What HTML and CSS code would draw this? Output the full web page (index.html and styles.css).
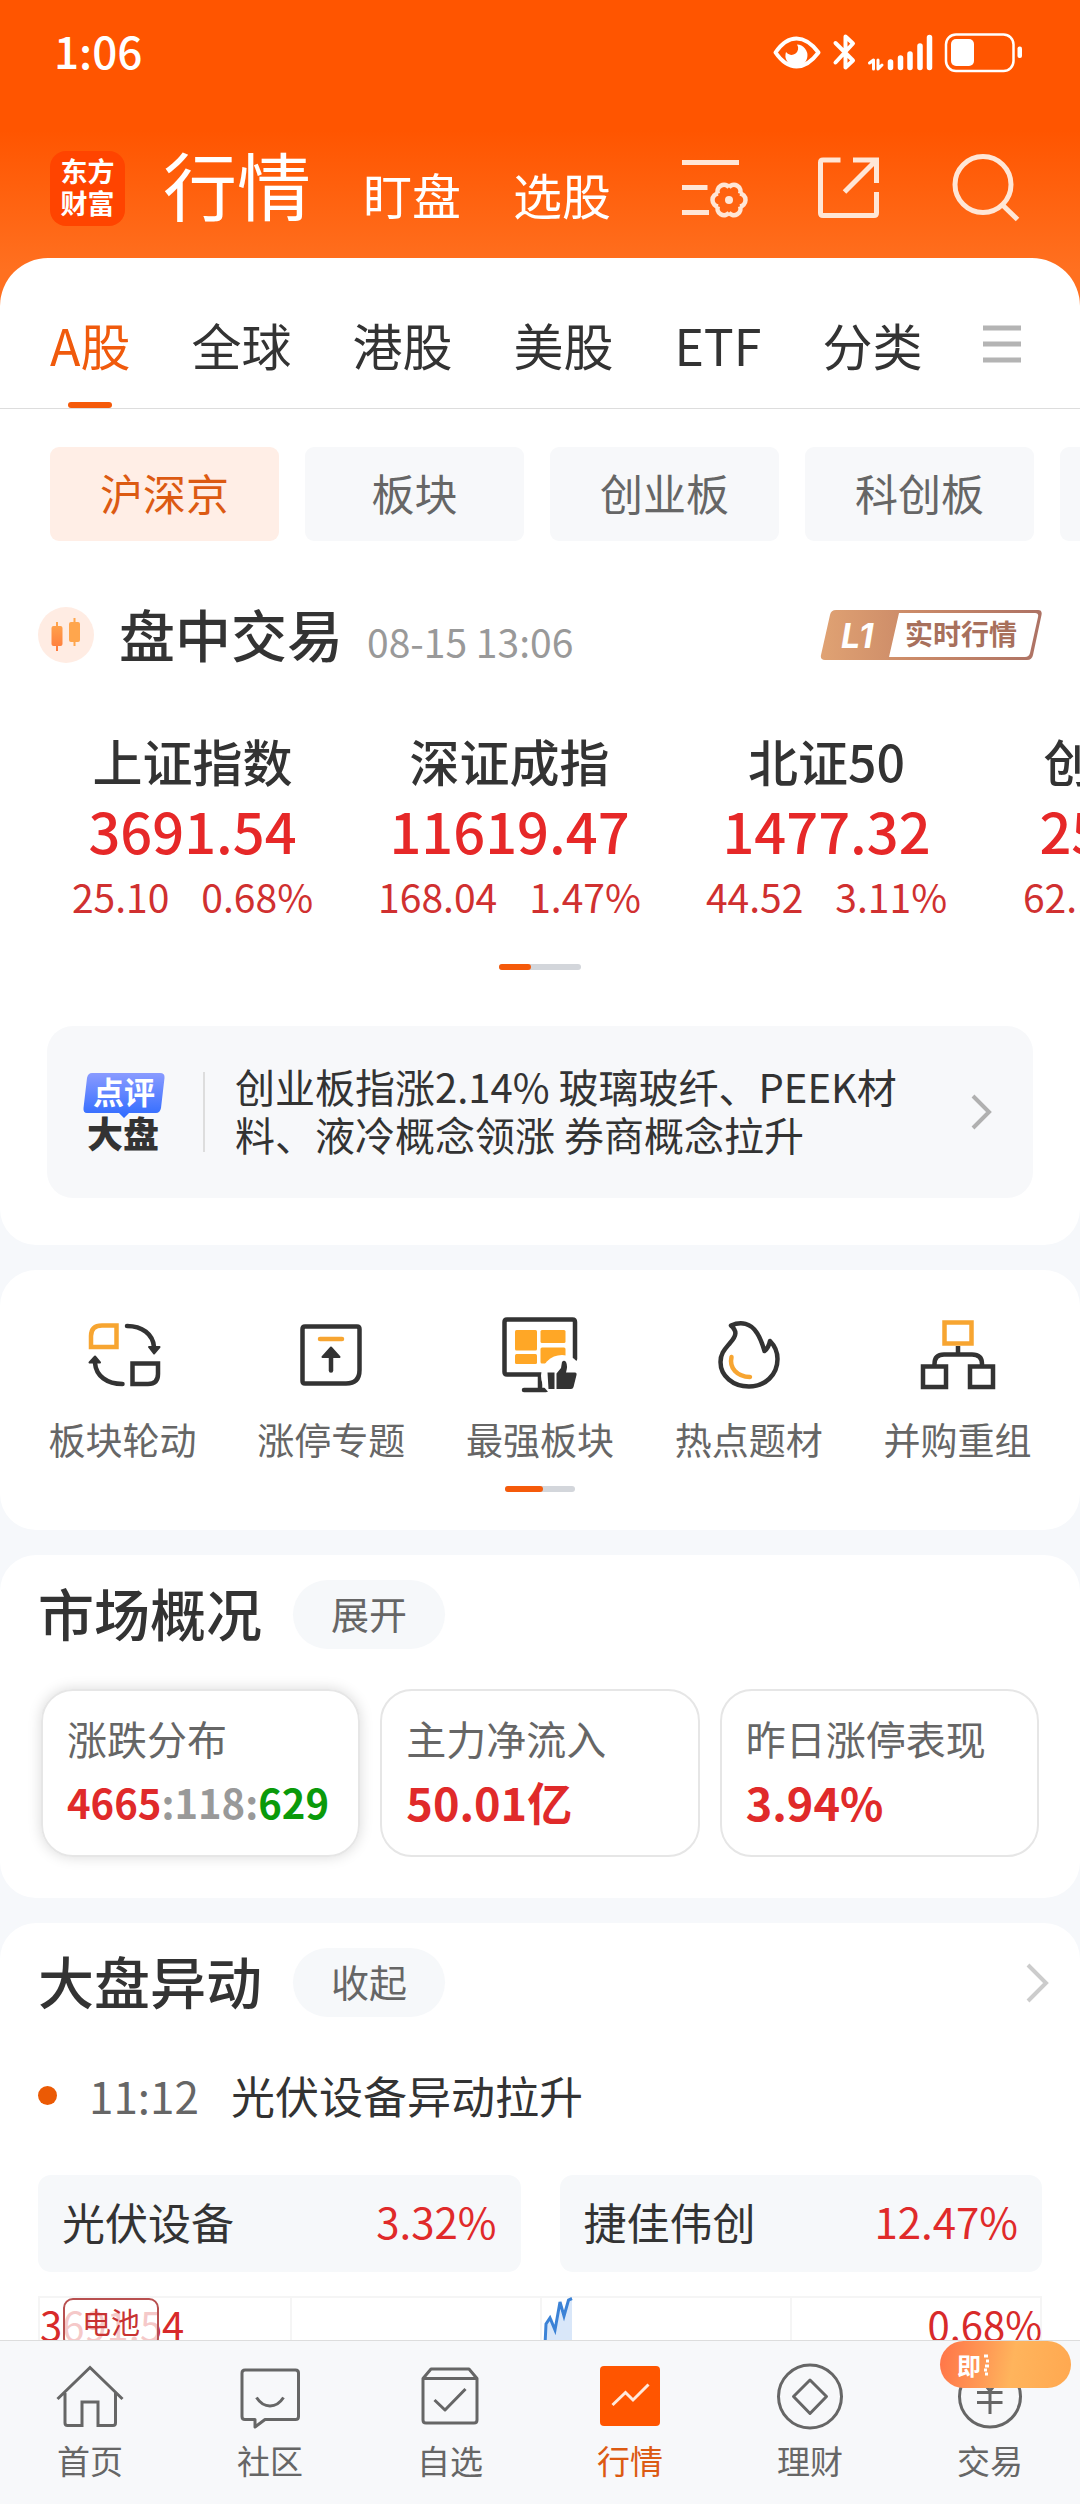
FILE: index.html
```html
<!DOCTYPE html>
<html lang="zh-CN">
<head>
    <meta charset="UTF-8">
    <meta name="viewport" content="width=device-width, initial-scale=1.0">
    <title>行情</title>
    <link rel="stylesheet" href="styles.css">
</head>
<body>
    <div class="app">
        <header class="header">
            <div class="status-bar">
                <span class="clock">1:06</span>
                <svg class="status-icons" width="256" height="48" viewBox="0 0 256 48" fill="none" stroke="#fff" stroke-linecap="round" stroke-linejoin="round">
                    <path d="M5.500 23.500Q15 9.500 26.500 9.500T48.500 23.500Q38 37.500 26.500 37.500T5.500 23.500Z" stroke-width="4"/>
                    <path d="M27 15.500A11 11 0 1 1 16 23A6.500 6.500 0 0 0 27 15.500Z" fill="#fff" stroke="none"/>
                    <path d="M65.500 14L83 31.500L75.500 38.500V7.500L83 14.500L65.500 33.500" stroke-width="4"/>
                    <path d="M99.500 34L103.500 31V40M108 31V40L112 36" stroke-width="3"/>
                    <path d="M120.500 33V38.500M130.500 29V38.500M140 25V38.500M150 17V38.500M159.500 8.500V38.500" stroke-width="5.500"/>
                    <rect x="176" y="5.500" width="67.500" height="36.500" rx="10" stroke-width="2.500"/>
                    <rect x="181" y="10" width="23" height="27" rx="5" fill="#fff" stroke="none"/>
                    <rect x="247.500" y="17.500" width="4.500" height="11.500" rx="2" fill="#fff" stroke="none"/>
                </svg>
            </div>
            <div class="title-bar">
                <div class="logo"><span>东方</span><span>财富</span></div>
                <nav class="main-tabs">
                    <a href="#" class="current">行情</a>
                    <a href="#">盯盘</a>
                    <a href="#">选股</a>
                </nav>
                <div class="tools">
                    <button aria-label="设置">
                        <svg width="72" height="72" viewBox="0 0 72 72" fill="none" stroke="#ffe6d6" stroke-width="5">
                            <path d="M4 10.500H61M4 35.500H29.500M4 60.500H31"/>
                            <g transform="translate(51 48)" stroke-width="4.500" stroke-linejoin="round">
                                <path id="tooth" d="M11 -6.500C13.500 -6 16.500 -4 16.500 0S13.500 6 11 6.500"/>
                                <use href="#tooth" transform="rotate(60)"/>
                                <use href="#tooth" transform="rotate(120)"/>
                                <use href="#tooth" transform="rotate(180)"/>
                                <use href="#tooth" transform="rotate(240)"/>
                                <use href="#tooth" transform="rotate(300)"/>
                                <circle r="4" fill="#ffe6d6" stroke="none"/>
                            </g>
                        </svg>
                    </button>
                    <button aria-label="分享">
                        <svg width="72" height="72" viewBox="0 0 72 72" fill="none" stroke="#ffe6d6" stroke-width="5">
                            <path d="M27.500 8H10Q7.500 8 7.500 10.500V61Q7.500 63.500 10 63.500H61Q63.500 63.500 63.500 61V40M40 8H63.500V31M63 8.500L31.500 40"/>
                        </svg>
                    </button>
                    <button aria-label="搜索">
                        <svg width="72" height="72" viewBox="0 0 72 72" fill="none" stroke="#ffe6d6" stroke-width="5">
                            <circle cx="35" cy="32.500" r="28"/>
                            <path d="M54 52.500L69.500 67.500"/>
                        </svg>
                    </button>
                </div>
            </div>
        </header>

        <main class="content">
            <section class="sheet">
                <nav class="market-tabs">
                    <a href="#" class="active">A股</a>
                    <a href="#">全球</a>
                    <a href="#">港股</a>
                    <a href="#">美股</a>
                    <a href="#">ETF</a>
                    <a href="#">分类</a>
                    <button class="menu-btn" aria-label="更多">
                        <svg width="38" height="38" viewBox="0 0 38 38" stroke="#b4b4b4" stroke-width="5">
                            <path d="M0 3H38M0 19H38M0 35H38"/>
                        </svg>
                    </button>
                </nav>

                <div class="chips">
                    <button class="chip active">沪深京</button>
                    <button class="chip">板块</button>
                    <button class="chip">创业板</button>
                    <button class="chip">科创板</button>
                    <button class="chip">北交所</button>
                </div>

                <div class="session">
                    <svg width="56" height="56" viewBox="0 0 56 56">
                        <defs>
                            <linearGradient id="candle" x1="0" y1="0" x2="0" y2="1">
                                <stop offset="0" stop-color="#ffa64d"/>
                                <stop offset="1" stop-color="#ff7a3d"/>
                            </linearGradient>
                        </defs>
                        <circle cx="28" cy="28" r="28" fill="#ffece3"/>
                        <path d="M18 15h2v4h2.500q2 0 2 2v16q0 2-2 2h-2.500v5h-2v-5h-2.500q-2 0-2-2V21q0-2 2-2h2.500z" fill="url(#candle)"/>
                        <path d="M35.500 11h2v4h2.500q2 0 2 2v16q0 2-2 2h-2.500v4h-2v-4h-2.500q-2 0-2-2V17q0-2 2-2h2.500z" fill="#ffa64d"/>
                    </svg>
                    <h2>盘中交易</h2>
                    <time>08-15 13:06</time>
                    <a href="#" class="level-badge" aria-label="L1 实时行情">
                        <svg width="222" height="50" viewBox="0 0 222 50">
                            <defs>
                                <linearGradient id="bronze" x1="0" y1="0" x2="1" y2="0">
                                    <stop offset="0" stop-color="#e0a273"/>
                                    <stop offset="0.4" stop-color="#cc8b68"/>
                                    <stop offset="1" stop-color="#ad7264"/>
                                </linearGradient>
                            </defs>
                            <path d="M16 0H218Q222.500 0 221.500 5L213 45Q212 50 207 50H5Q0 50 1 45L10 5Q11 0 16 0Z" fill="url(#bronze)"/>
                            <path d="M79 3H215Q219 3 218 7L210 43Q209 47 205 47H69Z" fill="#fff"/>
                            <text x="21" y="38" class="level-name">L1</text>
                            <text x="85" y="35" class="level-text">实时行情</text>
                        </svg>
                    </a>
                </div>

                <div class="indices">
                    <a href="#" class="index">
                        <span class="index-name">上证指数</span>
                        <span class="index-value">3691.54</span>
                        <span class="index-change"><span>25.10</span><span>0.68%</span></span>
                    </a>
                    <a href="#" class="index">
                        <span class="index-name">深证成指</span>
                        <span class="index-value">11619.47</span>
                        <span class="index-change"><span>168.04</span><span>1.47%</span></span>
                    </a>
                    <a href="#" class="index">
                        <span class="index-name">北证50</span>
                        <span class="index-value">1477.32</span>
                        <span class="index-change"><span>44.52</span><span>3.11%</span></span>
                    </a>
                    <a href="#" class="index">
                        <span class="index-name">创业板指</span>
                        <span class="index-value">2534.22</span>
                        <span class="index-change"><span>62.10</span><span>2.14%</span></span>
                    </a>
                </div>
                <div class="pager wide"><i></i></div>

                <a href="#" class="news">
                    <svg class="news-logo" width="82" height="82" viewBox="0 0 82 82">
                        <defs>
                            <linearGradient id="bubble" x1="0" y1="0" x2="0" y2="1">
                                <stop offset="0" stop-color="#8a9bff"/>
                                <stop offset="1" stop-color="#2f6bff"/>
                            </linearGradient>
                        </defs>
                        <path d="M9 2H77Q82 2 81.500 7L78 37Q77 42 73 42H46L41 47L36 42H4Q0 42 0.500 37L4 7Q5 2 9 2Z" fill="url(#bubble)"/>
                        <text x="10" y="33" class="bubble-text">点评</text>
                        <text x="4" y="77" class="board-text">大盘</text>
                    </svg>
                    <span class="news-text">创业板指涨2.14% 玻璃玻纤、PEEK材料、液冷概念领涨 券商概念拉升</span>
                    <svg width="22" height="38" viewBox="0 0 22 38" fill="none" stroke="#b0b0b0" stroke-width="4">
                        <path d="M2 3L18 19L2 35"/>
                    </svg>
                </a>
            </section>

            <section class="card features">
                <div class="feature-list">
                    <a href="#" class="feature">
                        <svg width="80" height="80" viewBox="0 0 80 80" fill="none" stroke="#333" stroke-width="4.500" stroke-linecap="round">
                            <path d="M34.500 9.500H20Q9 9.500 9 20V31H34.500Z" stroke="#f7a531" stroke-linecap="butt"/>
                            <path d="M45 10C60 10 71 18 72 31M40.500 68C25 68 14 60 13 47"/>
                            <path d="M67 31H77.500L72 37.500ZM7.500 46.500H18L13 40.500Z" fill="#333" stroke-width="2" stroke-linejoin="round"/>
                            <path d="M50.500 47.500H76V58Q76 68 66 68H50.500Z"/>
                        </svg>
                        <span>板块轮动</span>
                    </a>
                    <a href="#" class="feature">
                        <svg width="80" height="80" viewBox="0 0 80 80" fill="none" stroke="#333" stroke-width="4.500" stroke-linecap="round">
                            <path d="M14 10.500H66Q68.500 10.500 68.500 13V54Q68.500 67.500 55 67.500H14Q11.500 67.500 11.500 65V13Q11.500 10.500 14 10.500Z"/>
                            <path d="M29 23H51" stroke="#f7a531"/>
                            <path d="M40 38V54.500"/>
                            <path d="M40 31.500L48.500 41H31.500Z" fill="#333" stroke-width="2" stroke-linejoin="round"/>
                        </svg>
                        <span>涨停专题</span>
                    </a>
                    <a href="#" class="feature">
                        <svg width="80" height="80" viewBox="0 0 80 80">
                            <path d="M75 43V6Q75 3.500 72.500 3.500H7Q4.500 3.500 4.500 6V56Q4.500 58.500 7 58.500H50M40 59V74M24 74H46" fill="none" stroke="#333" stroke-width="4.500" stroke-linecap="round"/>
                            <g fill="#ffa726">
                                <rect x="15" y="14" width="22" height="20.500" rx="1.500"/>
                                <rect x="15" y="38" width="22" height="10" rx="1.500"/>
                                <rect x="40.500" y="14" width="25" height="13" rx="1.500"/>
                                <rect x="40.500" y="31.500" width="25" height="16" rx="1.500"/>
                            </g>
                            <circle cx="62" cy="60" r="21" fill="#fff"/>
                            <path d="M47.500 56.500H54.500V73H48.500ZM56.500 73V57.500L61 52L62 46Q64 43.500 66 46Q68 50 66 56.500H75Q77 56.500 76.500 59L73.500 71Q73 73 71 73Z" fill="#333"/>
                        </svg>
                        <span>最强板块</span>
                    </a>
                    <a href="#" class="feature">
                        <svg width="80" height="80" viewBox="0 0 80 80" fill="none" stroke="#333" stroke-width="4.500" stroke-linecap="round" stroke-linejoin="round">
                            <path d="M22 9.500C32 5 42 7 48 17C52 23 54 30 55.500 35C58 33 60 30 61 25C65 29 68.500 36 68.500 43C68.500 59 56 70.500 40 70.500C24 70.500 11.500 60 11.500 46C11.500 37 16 33 21 27C28 19 28 15 22 9.500Z"/>
                            <path d="M22.500 41C20 52 28 60.500 41 61" stroke="#f7a531"/>
                        </svg>
                        <span>热点题材</span>
                    </a>
                    <a href="#" class="feature">
                        <svg width="80" height="80" viewBox="0 0 80 80" fill="none" stroke="#333" stroke-width="4.500">
                            <path d="M40 30V39M16.500 50V48Q16.500 38.500 26 38.500H54Q64 38.500 64 48V50"/>
                            <rect x="26.500" y="6.500" width="27" height="21" stroke="#f7a531"/>
                            <rect x="5" y="50.500" width="23" height="20.500"/>
                            <rect x="52" y="50.500" width="23" height="20.500"/>
                        </svg>
                        <span>并购重组</span>
                    </a>
                </div>
                <div class="pager"><i></i></div>
            </section>

            <section class="card">
                <div class="card-head">
                    <h2>市场概况</h2>
                    <button class="pill">展开</button>
                </div>
                <div class="overview">
                    <button class="stat selected">
                        <span class="stat-label">涨跌分布</span>
                        <span class="stat-value ratio"><span class="up">4665</span><span class="flat">:118:</span><span class="down">629</span></span>
                    </button>
                    <button class="stat">
                        <span class="stat-label">主力净流入</span>
                        <span class="stat-value up">50.01亿</span>
                    </button>
                    <button class="stat">
                        <span class="stat-label">昨日涨停表现</span>
                        <span class="stat-value up">3.94%</span>
                    </button>
                </div>
            </section>

            <section class="card moves">
                <div class="card-head">
                    <h2>大盘异动</h2>
                    <button class="pill">收起</button>
                    <a href="#" class="more" aria-label="查看更多">
                        <svg width="24" height="42" viewBox="0 0 24 42" fill="none" stroke="#ccc" stroke-width="4">
                            <path d="M2 3L20 21L2 39"/>
                        </svg>
                    </a>
                </div>
                <div class="event">
                    <i class="dot"></i>
                    <time>11:12</time>
                    <span>光伏设备异动拉升</span>
                </div>
                <div class="tiles">
                    <a href="#" class="tile"><span>光伏设备</span><span class="up rate">3.32%</span></a>
                    <a href="#" class="tile"><span>捷佳伟创</span><span class="up rate">12.47%</span></a>
                </div>
                <div class="chart">
                    <div class="chart-grid"><i></i><i></i><i></i><i></i></div>
                    <div class="chart-labels"><span>3691.54</span><span>0.68%</span></div>
                    <span class="chart-tag">电池</span>
                    <svg class="chart-line" width="30" height="60" viewBox="0 0 30 60">
                        <path d="M2 60L4 28L9 22L13 34L18 6L21 20L26 4L29 3V60Z" fill="#d9e7f9"/>
                        <path d="M1.500 60L3 28L7 22L12 34L17 6L21 20L25.500 4L29 2.500" fill="none" stroke="#3b82d6" stroke-width="3"/>
                    </svg>
                </div>
            </section>
        </main>

        <nav class="bottom-nav">
            <a href="#">
                <svg width="72" height="72" viewBox="0 0 72 72" fill="none" stroke="#666" stroke-width="3">
                    <path d="M3.500 39L36 7.500L68.500 39M11 33V63Q11 65.500 13.500 65.500H28V42H44V65.500H59Q61.500 65.500 61.500 63V33"/>
                </svg>
                <span>首页</span>
            </a>
            <a href="#">
                <svg width="72" height="72" viewBox="0 0 72 72" fill="none" stroke="#666" stroke-width="3" stroke-linejoin="round">
                    <path d="M11 10H61.500Q64.500 10 64.500 13V56.500Q64.500 59.500 61.500 59.500H31L21 67V59.500H11Q8 59.500 8 56.500V13Q8 10 11 10Z"/>
                    <path d="M22.500 37.500Q28 46 36 46T49.500 37.500"/>
                </svg>
                <span>社区</span>
            </a>
            <a href="#">
                <svg width="72" height="72" viewBox="0 0 72 72" fill="none" stroke="#666" stroke-width="3" stroke-linejoin="round">
                    <path d="M9 18.500L17 9H55L63 18.500V60Q63 63 60 63H12Q9 63 9 60ZM9 18.500H63"/>
                    <path d="M20.500 40L31 50L51.500 29"/>
                </svg>
                <span>自选</span>
            </a>
            <a href="#" class="active">
                <svg width="72" height="72" viewBox="0 0 72 72">
                    <rect x="6" y="6" width="60" height="60" rx="4" fill="#ff5500"/>
                    <path d="M18.500 45L31.500 32.500L39 40L54.500 24.500" fill="none" stroke="#ffe9dc" stroke-width="3"/>
                </svg>
                <span>行情</span>
            </a>
            <a href="#">
                <svg width="72" height="72" viewBox="0 0 72 72" fill="none" stroke="#666" stroke-width="3" stroke-linejoin="round">
                    <circle cx="36" cy="36.500" r="31.500"/>
                    <path d="M36 20L52.500 36.500L36 53.500L19.500 36.500Z"/>
                </svg>
                <span>理财</span>
            </a>
            <a href="#">
                <svg width="72" height="72" viewBox="0 0 72 72" fill="none" stroke="#666" stroke-width="3">
                    <circle cx="36" cy="36.500" r="30.500"/>
                    <path d="M26 18L36 31L46 18M23 32.500H48.500M23 42.500H48.500M36 31V54"/>
                </svg>
                <span>交易</span>
                <em class="promo">即<svg width="8" height="22" viewBox="0 0 8 22" stroke="#fff" stroke-width="3"><path d="M1 2H5M3 7H6M2 12H6M1 16H4M2 20H5"/></svg></em>
            </a>
        </nav>
    </div>
</body>
</html>
```
FILE: styles.css
```css
* {
    margin: 0;
    padding: 0;
    box-sizing: border-box;
}

body {
    font-family: "Noto Sans CJK SC", sans-serif;
    background-color: #f6f8fb;
    color: #333;
}

a {
    color: inherit;
    text-decoration: none;
}

button {
    font-family: inherit;
    color: inherit;
    background: none;
    border: none;
    cursor: pointer;
}

svg {
    display: block;
    flex-shrink: 0;
}

.app {
    height: 100vh;
    display: flex;
    flex-direction: column;
}

.up {
    color: #e02a2a;
}

.flat {
    color: #999;
}

.down {
    color: #0a9a0a;
}

/* header */
.header {
    flex-shrink: 0;
    padding-bottom: 68px;
    background: linear-gradient(#ff5500 130px, #ff7020 270px);
    color: #fff;
}

.status-bar {
    height: 106px;
    padding: 0 54px;
    display: flex;
    align-items: center;
    justify-content: space-between;
}

.clock {
    padding-bottom: 6px;
    font-size: 44px;
    font-weight: 500;
    line-height: 60px;
}

.title-bar {
    height: 100px;
    margin-top: 32px;
    padding: 0 60px 0 50px;
    display: flex;
    align-items: center;
}

.logo {
    width: 75px;
    height: 75px;
    padding-bottom: 3px;
    border-radius: 16px;
    background-color: #ff4400;
    display: flex;
    flex-direction: column;
    align-items: center;
    justify-content: center;
    font-size: 27px;
    font-weight: 700;
    line-height: 32px;
}

.main-tabs {
    display: flex;
    align-items: baseline;
    gap: 52px;
    margin-left: 38px;
    font-size: 49px;
    line-height: 100px;
}

.main-tabs .current {
    font-size: 74px;
}

.tools {
    display: flex;
    gap: 63px;
    margin-left: auto;
}

/* first sheet */
.content {
    flex: 1;
    min-height: 0;
    overflow: hidden;
    margin-top: -48px;
}

.sheet {
    background-color: #fff;
    border-radius: 48px 48px 36px 36px;
    padding-bottom: 47px;
    overflow: hidden;
}

.market-tabs {
    display: flex;
    align-items: center;
    gap: 61px;
    padding: 22px 50px 0;
    border-bottom: 1px solid #ddd;
    font-size: 50px;
    line-height: 128px;
}

.market-tabs .active {
    position: relative;
    color: #f05a0c;
}

.market-tabs .active::after {
    content: "";
    position: absolute;
    left: 50%;
    bottom: 0;
    width: 44px;
    height: 6px;
    margin-left: -22px;
    border-radius: 3px;
    background-color: #f55a0a;
}

.chips {
    display: flex;
    gap: 26px;
    margin-top: 38px;
    padding-left: 50px;
}

.chip {
    flex-shrink: 0;
    min-width: 219px;
    height: 94px;
    padding: 0 50px 5px;
    border-radius: 9px;
    background-color: #f7f8fa;
    color: #666;
    font-size: 43px;
}

.chip.active {
    background-color: #ffeee6;
    color: #dc5a12;
}

.session {
    display: flex;
    align-items: center;
    height: 70px;
    margin-top: 59px;
    padding: 0 38px;
}

h2 {
    padding-bottom: 6px;
    font-size: 56px;
    font-weight: 500;
    line-height: 63px;
}

.session h2 {
    margin-left: 25px;
}

.session time {
    margin: 12px 0 0 24px;
    font-size: 39px;
    line-height: 56px;
    color: #999;
}

.level-badge {
    margin-left: auto;
}

.level-name {
    font-family: "Inter", sans-serif;
    font-size: 34px;
    font-weight: 700;
    font-style: italic;
    fill: #fff;
}

.level-text {
    font-size: 28px;
    font-weight: 700;
    fill: #a8705c;
}

.indices {
    display: grid;
    grid-auto-flow: column;
    grid-auto-columns: 317px;
    margin-top: 62px;
    padding-left: 34px;
}

.index {
    display: flex;
    flex-direction: column;
    align-items: center;
}

.index-name {
    font-size: 50px;
    font-weight: 500;
    line-height: 56px;
}

.index-value {
    margin-top: 10px;
    font-size: 56px;
    font-weight: 500;
    line-height: 64px;
    color: #e62828;
}

.index-change {
    display: flex;
    gap: 32px;
    margin-top: 9px;
    font-size: 39px;
    line-height: 50px;
    color: #d03030;
}

.pager {
    width: 70px;
    height: 6px;
    margin: 22px auto 0;
    border-radius: 3px;
    background-color: #d3d6db;
}

.pager i {
    display: block;
    width: 38px;
    height: 6px;
    border-radius: 3px;
    background-color: #f55a0a;
}

.pager.wide {
    width: 82px;
    margin-top: 43px;
}

.pager.wide i {
    width: 32px;
}

.news {
    display: flex;
    align-items: center;
    margin: 56px 47px 0;
    padding: 36px 40px 36px 36px;
    border-radius: 26px;
    background-color: #f7f8fa;
}

.bubble-text {
    font-size: 31px;
    font-weight: 700;
    fill: #fff;
}

.board-text {
    font-size: 36px;
    font-weight: 900;
    fill: #333;
}

.news-text {
    flex: 1;
    margin-left: 38px;
    padding: 0 60px 4px 32px;
    font-size: 40px;
    line-height: 48px;
    background: linear-gradient(#ddd, #ddd) left center / 2px 80px no-repeat;
}

/* cards */
.card {
    margin-top: 25px;
    padding-bottom: 41px;
    border-radius: 36px;
    background-color: #fff;
}

.features {
    padding: 46px 0 38px;
}

.feature-list {
    display: grid;
    grid-template-columns: repeat(5, 1fr);
    padding: 0 18px;
}

.feature {
    display: flex;
    flex-direction: column;
    align-items: center;
    gap: 18px;
    font-size: 37px;
    line-height: 50px;
    color: #666;
}

.card-head {
    display: flex;
    align-items: center;
    padding: 25px 30px 0 38px;
}

.pill {
    width: 152px;
    height: 69px;
    margin-left: 31px;
    padding-bottom: 3px;
    border-radius: 35px;
    background-color: #f6f8fa;
    font-size: 38px;
    line-height: 50px;
    color: #666;
}

.more {
    margin-left: auto;
}

.overview {
    display: grid;
    grid-template-columns: repeat(3, minmax(0, 1fr));
    gap: 20px;
    margin-top: 40px;
    padding: 0 41px;
}

.stat {
    display: flex;
    flex-direction: column;
    gap: 11px;
    padding: 22px 24px 25px;
    border: 2px solid #e6e6e6;
    border-radius: 32px;
    text-align: left;
    white-space: nowrap;
}

.stat.selected {
    box-shadow: 0 0 14px rgba(0, 0, 0, 0.15);
}

.stat-label {
    font-size: 40px;
    line-height: 50px;
    color: #666;
}

.stat-value {
    font-size: 45px;
    font-weight: 700;
    line-height: 56px;
}

.ratio {
    font-size: 40px;
}

.event {
    display: flex;
    align-items: center;
    margin-top: 48px;
    padding: 0 38px;
    font-size: 44px;
    line-height: 60px;
}

.dot {
    width: 19px;
    height: 19px;
    border-radius: 50%;
    background-color: #eb5a05;
}

.event time {
    margin: 0 32px;
    color: #666;
}

.tiles {
    display: grid;
    grid-template-columns: 1fr 1fr;
    gap: 39px;
    margin-top: 50px;
    padding: 0 38px;
}

.tile {
    display: flex;
    justify-content: space-between;
    align-items: center;
    height: 97px;
    padding: 0 24px 6px;
    border-radius: 13px;
    background-color: #f6f8fa;
    font-size: 43px;
}

.rate {
    font-size: 42px;
}

.moves {
    padding-bottom: 0;
}

.chart {
    position: relative;
    margin: 24px 38px 0;
}

.chart-grid {
    display: grid;
    grid-template-columns: repeat(4, 1fr);
    height: 240px;
    border: 2px solid #f5f5f5;
}

.chart-grid i + i {
    border-left: 2px solid #f5f5f5;
}

.chart-labels {
    position: absolute;
    top: 0;
    left: 2px;
    right: 0;
    display: flex;
    justify-content: space-between;
    font-size: 40px;
    line-height: 56px;
    color: #d82a2a;
}

.chart-tag {
    position: absolute;
    top: 2px;
    left: 25px;
    padding: 0 17px 4px;
    border: 2px solid #b85050;
    border-radius: 10px;
    background-color: rgba(255, 255, 255, 0.75);
    font-size: 29px;
    line-height: 42px;
    color: #c83232;
}

.chart-line {
    position: absolute;
    top: 0;
    left: 50%;
    margin-left: 3px;
}

/* bottom navigation */
.bottom-nav {
    position: relative;
    flex-shrink: 0;
    display: grid;
    grid-template-columns: repeat(6, 1fr);
    padding: 19px 0 20px;
    border-top: 1px solid #ddd;
    background-color: #f7f8fa;
}

.bottom-nav a {
    position: relative;
    display: flex;
    flex-direction: column;
    align-items: center;
    gap: 4px;
    font-size: 33px;
    line-height: 48px;
    color: #666;
}

.bottom-nav .active {
    color: #dc5a12;
}

.promo {
    position: absolute;
    top: -19px;
    right: 9px;
    display: flex;
    align-items: center;
    gap: 2px;
    width: 131px;
    height: 47px;
    padding-left: 17px;
    border-radius: 24px;
    background: linear-gradient(100deg, #ff7448, #ff9a55 35%, #ffb45c 55%, #ffa850);
    color: #fff;
    font-size: 24px;
    font-style: normal;
    font-weight: 700;
}
```
